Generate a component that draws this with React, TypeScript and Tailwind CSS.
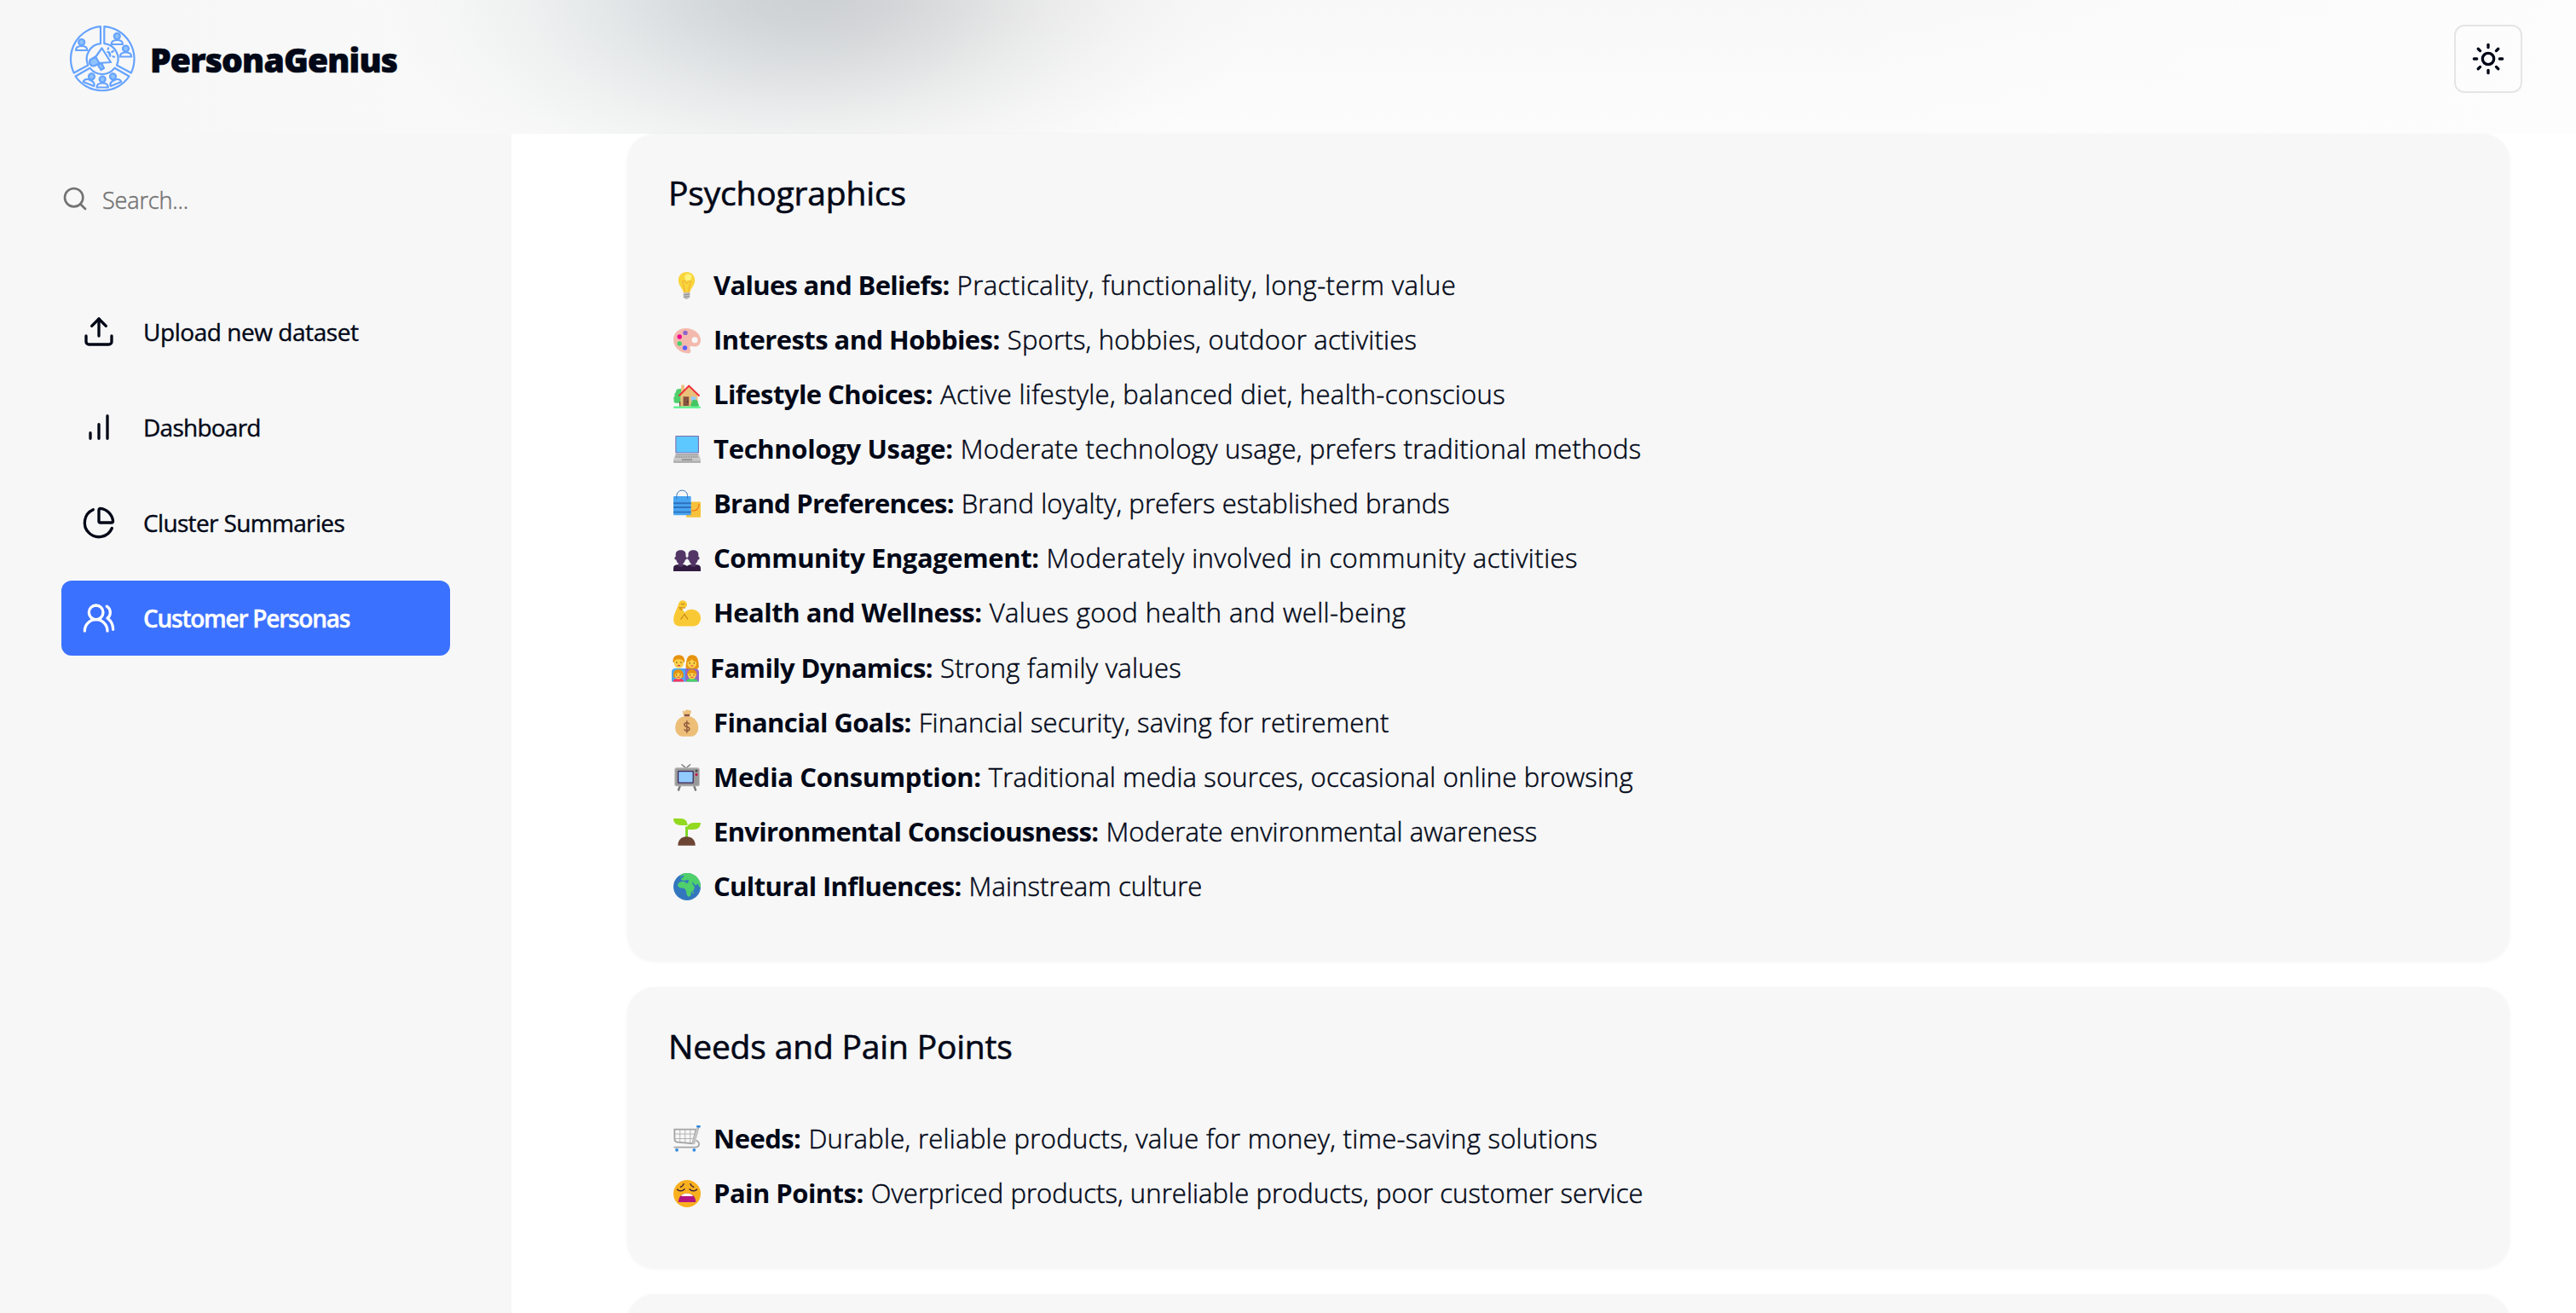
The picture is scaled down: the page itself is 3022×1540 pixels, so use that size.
import type { ReactNode } from "react";
import { PieChart, Search, Sun, Upload, UsersRound } from "lucide-react";

const emojis: Record<string, ReactNode> = {
  bulb: (
    <>
      <path d="M15.500 0C10 0 5.800 4.200 5.800 9.700c0 3.300 1.500 5.800 2.900 8.100C10 20 11.200 21.800 11.600 24h7.800c.4-2.200 1.600-4 2.900-6.200 1.400-2.300 2.900-4.800 2.900-8.100C25.200 4.200 21 0 15.500 0Z" fill="#F9D53C" />
      <path d="M13.600 23.500 11.500 14.500c-.8-2.500-1.300-4 .2-4.500 1.600-.4 2.200 3.500 3.800 3.500s2.200-3.900 3.800-3.500c1.500.5 1 2 .2 4.500l-2.100 9" fill="none" stroke="#F2A930" strokeWidth="1" />
      <circle cx="17.200" cy="6.200" r="4" fill="#FDF27A" />
      <path d="M11.700 24h7.600v5.500c0 .6-.6 1-1.300 1.200-.6 1.700-4.400 1.700-5 0-.7-.2-1.300-.6-1.300-1.200Z" fill="#C4C4C4" />
      <path d="m12 27 7.200-1.400M12.200 29.600l6.800-1.400" stroke="#8E8E8E" strokeWidth="1.100" />
    </>
  ),
  palette: (
    <>
      <path fillRule="evenodd" d="M14.500 2C24.500 2 32 8.500 32 16c0 4.500-3 7.600-7 7.600-2 0-3-.6-4.200-.6-1.800 0-1.800 1.800-1 3.400 1 2.400.4 5-2.400 5C8 31.400 0 24.500 0 15.500 0 7.500 6 2 14.500 2ZM25 12.300a3.500 3.500 0 1 0 0 7 3.500 3.500 0 0 0 0-7Z" fill="#F4B9AD" />
      <circle cx="7.200" cy="12" r="2.700" fill="#EE0290" />
      <circle cx="14" cy="7.400" r="2.700" fill="#8F65C8" />
      <circle cx="7.200" cy="20" r="2.700" fill="#44D26A" />
      <circle cx="13.500" cy="25" r="2.700" fill="#5B5FFC" />
    </>
  ),
  house: (
    <>
      <path d="M9 5.600C9 5 9.400 4.600 10 4.600h2c.6 0 1 .4 1 1V14H9Z" fill="#EEC284" />
      <path d="M7.500 9C4 8.500 2.500 11 3 13c-2 1-2 3-1.200 4.300C0 18.500-.3 21 .8 22c-1 2.500.7 4 2.700 3.800H9V9Z" fill="#4FD06D" />
      <path d="M7 24h2v6H7Z" fill="#7A4B3A" />
      <path d="M8.300 15 18 6l10.500 9v15H8.300Z" fill="#EABF79" />
      <path d="M11.500 18.200h6.700V29h-6.700Z" fill="#85523F" />
      <circle cx="16.700" cy="24.300" r=".8" fill="#3B2020" />
      <path d="M20.700 18.200h5.600v5h-5.600Z" fill="#92CBFF" />
      <path d="M6.300 17.500 18.200 5.500l12.300 12" fill="none" stroke="#EF2A38" strokeWidth="1.800" />
      <circle cx="25" cy="25.500" r="3.800" fill="#44C563" />
      <ellipse cx="25" cy="28" rx="5" ry="3" fill="#44C563" />
      <rect y="29.500" width="32" height="2.500" rx="1.200" fill="#66F294" />
    </>
  ),
  laptop: (
    <>
      <rect x="2.300" width="27.700" height="20.500" rx=".8" fill="#7F6FB0" />
      <rect x="3.400" y="1" width="25.500" height="18.500" fill="#5DC8FF" />
      <path d="M2.500 21h27L32 28v3.400H0V28Z" fill="#C9C9C9" />
      <path d="M3.300 22.500h25.500M2.700 25h26.500" stroke="#8C8C8C" strokeWidth="1.500" strokeDasharray="1.300 .7" />
      <path d="M0 29.500h32v1.500c0 .5-.5 1-1 1H1c-.5 0-1-.5-1-1Z" fill="#B0B0B0" />
      <rect x="9.800" y="27" width="12.400" height="2.200" rx=".6" fill="#9A9A9A" />
    </>
  ),
  bags: (
    <>
      <rect x="15" y="13.500" width="17" height="18.300" rx="1" fill="#F6C23B" />
      <path d="M30 16c.3 4.500-2.500 8-6 8h-3" fill="none" stroke="#F56A1D" strokeWidth="1.100" />
      <rect y="7" width="20.600" height="22.300" rx="1" fill="#48A5F2" />
      <path d="M0 15.300h20.600M0 20h20.600M0 25.600h20.600" stroke="#2C70BC" strokeWidth="1.900" />
      <path d="M3.800 10V6.500a6.400 6.400 0 0 1 12.800 0V10" fill="none" stroke="#3878BE" strokeWidth="1" />
    </>
  ),
  people: (
    <>
      <path d="M0 31h16V25c-1-1.200-3-1.700-4.800-1.700h-6C2 23.300 0 24.700 0 27.500V31Z" fill="#321B41" />
      <path d="M32 31H16V25c1-1.200 3-1.700 4.800-1.700h6c3.200 0 5.200 1.400 5.200 4.200V31Z" fill="#321B41" />
      <path d="M8.600 6.300C5 6.300 2.700 8 2.700 11v3c-2 .3-1.700 3.500.6 3.600.4 2 1.300 3.500 2.600 4.500v2.200c0 2 5.400 2 5.400 0v-2.200c1.300-1 2.200-2.500 2.600-4.500 2.300-.1 2.600-3.300.6-3.600v-3c0-3-2.300-4.700-5.900-4.700Z" fill="#533566" />
      <path d="M23.400 6.300c-3.600 0-5.900 1.700-5.900 4.700v3c-2 .3-1.700 3.500.6 3.600.4 2 1.300 3.500 2.600 4.500v2.200c0 2 5.400 2 5.400 0v-2.200c1.300-1 2.200-2.500 2.600-4.500 2.300-.1 2.600-3.300.6-3.600v-3c0-3-2.300-4.700-5.900-4.700Z" fill="#533566" />
    </>
  ),
  flex: (
    <>
      <path d="M6 5.500C7 2 9 1 11 1.200c3 .2 5.300 2.500 5 5.500-.3 2.500-2 3.300-4.600 3.300-.6 2 .2 4 2.100 5.300C15.500 12.500 18.500 11.500 22 11.700c5.500.3 10 4.300 10 10 0 5.500-3.500 9.800-9 9.800H7.500C2.500 31.500-.3 28 .2 22.500.7 17 4.500 10.500 6 5.500Z" fill="#F9C935" />
      <path d="M6.500 9.500c3 .5 5 .7 7.500.3M9 5.200c1.500.7 3 .6 4-.2M7 10.500l3 2M8.500 23.500l4.500-6 4 6" fill="none" stroke="#C48619" strokeWidth="1.200" />
    </>
  ),
  family: (
    <>
      <path d="M0 31.500V20c0-3 2-4 4-4h12v15.500Z" fill="#4FA8F2" />
      <path d="M16 31.500V16h11c3 0 5 1.500 5 4.500v11Z" fill="#9166C9" />
      <path d="M1.500 9C1 3 4 .3 8.300.3S15.600 3 15 9Z" fill="#E6930F" />
      <path d="M16.500 14C17.500 5 18 .3 24 .3S31.500 5 31.700 14c0 2-2 3-4 2.500h-7c-2.500.5-4.200-.5-4.200-2.500Z" fill="#E6930F" />
      <path d="M3 7c2-2.500 8-2.500 10.800 0v3.500c0 3-2.500 5-5.400 5S3 13.500 3 10.500Z" fill="#FAD14B" />
      <path d="M18.500 8.500C21 8 22.500 6.500 23.500 5c1.500 2 3 3 5.500 3.500v2c0 3-2.500 5-5.300 5s-5.200-2-5.200-5Z" fill="#FAD14B" />
      <path d="M1.500 31.500C2 28.500 4 28 7.800 28s6 .5 6.500 3.500Z" fill="#F7345F" />
      <path d="M17 31.500c.5-3 2.500-3.500 6.500-3.500s6.500.5 7 3.500Z" fill="#44D565" />
      <path d="M2 26c-.5-6 1.500-8.800 5.800-8.800s6.500 2.800 6 8.800c0 1.500-11.800 1.500-11.800 0Z" fill="#E6930F" />
      <path d="M18 24c0-4.500 2-6.800 5.800-6.800S29.500 19.500 29.500 24Z" fill="#E6930F" />
      <path d="M3.800 23c2-.3 3-1.200 4-2.500 1 1.300 2.200 2.200 4.200 2.500 0 3.500-1.500 5.500-4.200 5.500s-4-2-4-5.500Z" fill="#FAD14B" />
      <path d="M19 23c2.500-2 7-2 9.500 0 .3 3.500-2 5.500-4.800 5.500S18.700 26.500 19 23Z" fill="#FAD14B" />
      <path d="M5.800 8.300v1.400M11 8.300v1.400M21.200 9v1.400M26.300 9v1.400M5.700 23.200v1.200M10 23.200v1.200M21.500 23.200v1.200M26 23.200v1.200" stroke="#6B3B12" strokeWidth="1.100" />
      <path d="M6.800 12.600h3.200M22.300 13h3M6.500 26.300h2.800M22.500 26.300h2.800" stroke="#D9314B" strokeWidth="1.100" />
    </>
  ),
  money: (
    <>
      <path d="M12 7 10.500 2c1-1 2 .8 3 0L15.500 0c1 0 1.500 1.500 2.500 1s2.500.5 3 1.500L19.500 7Z" fill="#EDC17E" />
      <path d="M12 8.300C5.500 10 2.200 15.500 2.200 21.500c0 7 4.500 10.300 9.500 10.300h8c5 0 9.500-3.300 9.500-10.300 0-6-3.700-11.500-9.700-13.200Z" fill="#ECBE78" />
      <rect x="12.700" y="5.800" width="6.300" height="2.400" rx=".8" fill="#8A5141" />
      <path d="M18.800 17.300c-.7-1.200-1.800-1.600-3-1.600-1.800 0-3 .9-3 2.300 0 3.300 6 1.600 6 4.800 0 1.500-1.300 2.400-3 2.400-1.500 0-2.700-.6-3.300-1.900M15.800 13.200v14.500" fill="none" stroke="#935B3F" strokeWidth="1.500" />
    </>
  ),
  tv: (
    <>
      <path d="M9.500.5 14.800 5 20 .5" fill="none" stroke="#6D6D6D" strokeWidth="1.200" />
      <path d="m8 25-2.300 6.500M24 25l2.300 6.500" stroke="#767676" strokeWidth="2.300" />
      <rect x="1.300" y="4.300" width="29.500" height="22" rx="2.500" fill="#B5B5B5" />
      <rect x="2.500" y="5.500" width="27.500" height="19.800" rx="1.500" fill="#989898" />
      <rect x="5" y="8" width="18.800" height="14.700" rx="1" fill="#3B2458" />
      <rect x="6.200" y="9.200" width="16.400" height="12.300" rx=".4" fill="#92CBFF" />
      <circle cx="27" cy="8.200" r="1.400" fill="#4B4B4B" />
      <circle cx="27" cy="12.500" r="1.500" fill="#CA0B4A" />
    </>
  ),
  plant: (
    <>
      <path d="M14 22V9.500h3V22Z" fill="#7FD82B" />
      <path d="M0 0h8.500C13.500 0 16.500 3 16.500 8H9C3.500 8 0 5 0 0Z" fill="#92D91F" />
      <path d="M32 5h-8c-5 0-8.500 3-8.500 8H23c5.500 0 9-3 9-8Z" fill="#92D91F" />
      <path d="M5.300 31.700C5.300 25 9.500 21.300 15.500 21.300S25.700 25 25.700 31.700Z" fill="#6D4534" />
    </>
  ),
  globe: (
    <>
      <circle cx="16" cy="16" r="16" fill="#3277BE" />
      <path d="M9 1.700C11 .7 14 0 16.500 0 22 0 27.500 3 30 8.300c1.700 3.400 2 5.200 2 8l-1.500.8-1.300-3.500-1.800-1-.4 2.200-2.300-1.500-2.500-3.500.6 3.700 2 2.500-.6 3.500-3.400 3-.8 4.500-2.500.7-2-2.500-.5-4.200-2-3-3.500-.5c-2.500-.2-4.500-1.500-4.400-3.500.2-2.300 2-3.500 5-4l3.500.2 1.500 1.800 2.500-.5-.5-2-4-1-3 1-1.500-1.500 1-2.500-1.500-2Z" fill="#4FD06B" />
      <path d="M9.500 3.200 12 2.500v2L9 6.500ZM7 9.500l3-2 1 1.500ZM14.500 8.700l2.500-1 1.500 1.500-2 .8Z" fill="#3277BE" />
      <path d="M22.500 22 23.700 21v2.500l-1.500 1Z" fill="#4FD06B" />
    </>
  ),
  cart: (
    <>
      <path d="M29.500 2 23.800 21.500M.5 25.700h25c3.500 0 5.300-2.500 4.300-5.200-.6-1.500-1.800-2.300-3.300-2.800" fill="none" stroke="#A5A5A5" strokeWidth="1.800" />
      <path d="M1.300 4.600h25.200l-4 16.600L4.500 19.600C2.500 19.400 1.500 18 1.400 16Z" fill="none" stroke="#A3A3A3" strokeWidth="1.800" />
      <path d="M7.700 5v14.600M13.700 5v15M19.700 5v15.500M1.500 10h23.700M1.500 15.500h22.500" stroke="#B4B4B4" strokeWidth="1" />
      <path d="M28.600 3.500 23.500 22" stroke="#C4C4C4" strokeWidth="3" />
      <rect x="27" y="0" width="4.800" height="2.600" rx="1" fill="#2F86DD" />
      <circle cx="4" cy="28.800" r="1.900" fill="#3089DF" />
      <circle cx="24.300" cy="28.800" r="1.900" fill="#3089DF" />
    </>
  ),
  weary: (
    <>
      <circle cx="16" cy="16" r="16" fill="#F8B01E" />
      <path d="M8.500 8.200c1.800-.6 3-1.800 3.500-3.600M23.500 8.200c-1.800-.6-3-1.800-3.500-3.600M4.500 11c2 2.500 6 2.500 8.500-.3M27.500 11c-2 2.500-6 2.500-8.500-.3" fill="none" stroke="#3F2338" strokeWidth="1.500" strokeLinecap="round" />
      <path d="M16 15.800c-7 0-10.200 4.700-10.200 10.200h20.400c0-5.500-3.200-10.200-10.200-10.200Z" fill="#B31480" />
      <path d="M9.500 18c1.500-1.500 3.800-2.200 6.500-2.200s5 .7 6.500 2.200c.5.600 0 1-.6 1H10.100c-.6 0-1.100-.4-.6-1Z" fill="#fff" />
    </>
  ),
};

type Row = { icon: string; label: string; lt: string; value: string; vt: string };

const psychographics: Row[] = [
  { icon: "bulb", label: "Values and Beliefs:", lt: "tracking-[-0.7px]", value: "Practicality, functionality, long-term value", vt: "tracking-[0.47px]" },
  { icon: "palette", label: "Interests and Hobbies:", lt: "tracking-[-0.56px]", value: "Sports, hobbies, outdoor activities", vt: "tracking-[0.24px]" },
  { icon: "house", label: "Lifestyle Choices:", lt: "tracking-[-0.55px]", value: "Active lifestyle, balanced diet, health-conscious", vt: "tracking-[0.34px]" },
  { icon: "laptop", label: "Technology Usage:", lt: "tracking-[-0.32px]", value: "Moderate technology usage, prefers traditional methods", vt: "tracking-[0.27px]" },
  { icon: "bags", label: "Brand Preferences:", lt: "tracking-[-0.74px]", value: "Brand loyalty, prefers established brands", vt: "tracking-[0.11px]" },
  { icon: "people", label: "Community Engagement:", lt: "tracking-[-0.42px]", value: "Moderately involved in community activities", vt: "tracking-[0.45px]" },
  { icon: "flex", label: "Health and Wellness:", lt: "tracking-[-0.49px]", value: "Values good health and well-being", vt: "tracking-[0.41px]" },
  { icon: "family", label: "Family Dynamics:", lt: "tracking-[-0.6px] -ml-1", value: "Strong family values", vt: "tracking-[0.31px]" },
  { icon: "money", label: "Financial Goals:", lt: "tracking-[-0.62px]", value: "Financial security, saving for retirement", vt: "tracking-[0.23px]" },
  { icon: "tv", label: "Media Consumption:", lt: "tracking-[-0.34px]", value: "Traditional media sources, occasional online browsing", vt: "tracking-[0.15px]" },
  { icon: "plant", label: "Environmental Consciousness:", lt: "tracking-[-0.69px]", value: "Moderate environmental awareness", vt: "tracking-[0.1px]" },
  { icon: "globe", label: "Cultural Influences:", lt: "tracking-[-0.64px]", value: "Mainstream culture", vt: "tracking-[0.1px]" },
];

const needs: Row[] = [
  { icon: "cart", label: "Needs:", lt: "tracking-[-0.55px]", value: "Durable, reliable products, value for money, time-saving solutions", vt: "tracking-[0.29px]" },
  { icon: "weary", label: "Pain Points:", lt: "tracking-[-0.55px]", value: "Overpriced products, unreliable products, poor customer service", vt: "tracking-[0.08px]" },
];

function Emoji({ name }: { name: string }) {
  const shift = name === "family" ? "-ml-0.5 mr-0.5" : "";
  return (
    <svg viewBox="0 0 32 32" className={`mt-0.5 h-8 w-8 shrink-0 overflow-visible ${shift}`}>
      {emojis[name]}
    </svg>
  );
}

function Card({ title, rows }: { title?: string; rows: Row[] }) {
  return (
    <section className="min-h-40 shrink-0 rounded-[32px] bg-[#f7f7f7] px-12 pb-14 shadow-[0_1px_4px_rgba(0,0,0,0.05)]">
      {title && (
        <h2 className="h-[145px] pt-[41px] text-[39px] leading-[56px] font-medium tracking-[-0.18px] [-webkit-text-stroke:0.6px]">{title}</h2>
      )}
      <ul>
        {rows.map((r) => (
          <li
            key={r.label}
            className={`flex items-center pl-1.5 text-[31px] leading-10 whitespace-pre ${r.icon === "family" ? "h-[65px] pt-px" : "h-16"}`}
          >
            <Emoji name={r.icon} />
            <span className={`pl-[15px] font-bold ${r.lt}`}>{r.label}</span>
            <span className={`pl-[9px] font-light [-webkit-text-stroke:0.5px] ${r.vt}`}>{r.value}</span>
          </li>
        ))}
      </ul>
    </section>
  );
}

function Bars() {
  return (
    <svg viewBox="0 0 24 24" className="h-10 w-10" fill="none" stroke="currentColor" strokeWidth="2" strokeLinecap="round">
      <path d="M6 20v-4M12 20V10M18 20V4" />
    </svg>
  );
}

function Person({ x, y, r = 0 }: { x: number; y: number; r?: number }) {
  return (
    <g transform={`translate(${x} ${y}) rotate(${r})`}>
      <path d="M-6.700 9.500C-6.700 6 -4 4.500 0 4.500S6.700 6 6.700 9.500Z" />
      <circle r="3.500" fill="#8fc3fb" />
    </g>
  );
}

function Logo() {
  return (
    <svg viewBox="0 0 80 80" className="h-20 w-20" fill="none" stroke="#66a3ff" strokeWidth="2.200" strokeLinejoin="round">
      <path d="M38 2.200A38 38 0 0 0 6.700 56.500L23.300 47.500A18 18 0 0 1 38 22.200Z" />
      <path d="M42.300 2.200A38 38 0 0 1 73.800 56.500L57 47.500A18 18 0 0 0 42.300 22.200Z" />
      <path d="M8.500 60.500A38 38 0 0 0 71.500 60.500L54.500 50.700A18 18 0 0 1 25.500 50.700Z" />
      <Person x={15.700} y={20.500} />
      <Person x={57.300} y={13.500} />
      <Person x={67.500} y={28} />
      <Person x={27.500} y={60.700} r={22} />
      <Person x={40.200} y={64} />
      <Person x={52.500} y={60.700} r={-22} />
      <path d="m39.500 27.500 10.500 16.500-14 1-4-7Z" />
      <path d="m26 41 6-3.500 4.500 7.500-6 3.500c-4.500 0-7-4-4.500-7.500ZM34.500 47l4.500-2 3 6-3.500 2Z" fill="#8fc3fb" />
      <path d="M45.500 32c3-.5 5 3 3 5.500" fill="#8fc3fb" />
      <path d="m46.500 29.500.8-3M50.500 32.500l3-2M51.500 37l3.500 1" />
    </svg>
  );
}

const nav = [
  { label: "Upload new dataset", tracking: "tracking-[-0.45px]", icon: <Upload size={40} /> },
  { label: "Dashboard", tracking: "tracking-[-0.75px]", icon: <Bars /> },
  { label: "Cluster Summaries", tracking: "tracking-[-0.65px]", icon: <PieChart size={40} /> },
  { label: "Customer Personas", tracking: "tracking-[-1.25px]", icon: <UsersRound size={40} />, active: true },
];

export default function App() {
  return (
    <div className="flex h-[1540px] w-[3022px] flex-col overflow-hidden bg-white font-['Open_Sans',sans-serif] text-[#020817]">
      <header className="flex h-[157px] shrink-0 items-start justify-between bg-[radial-gradient(ellipse_330px_200px_at_830px_-10px,rgba(130,180,200,0.08)_0%,rgba(130,180,200,0.04)_50%,transparent_100%),radial-gradient(ellipse_530px_275px_at_965px_-12px,rgba(20,25,35,0.175)_0%,rgba(20,25,35,0.154)_16.7%,rgba(20,25,35,0.108)_33.3%,rgba(20,25,35,0.062)_50%,rgba(20,25,35,0.028)_66.7%,rgba(20,25,35,0.009)_83.3%,transparent_100%),linear-gradient(to_right,#f7f7f7_0%,#f8f9f8_22%,transparent_45%,transparent_70%,#fdfdfd_100%),linear-gradient(to_bottom,#f8f8f8_0%,#fcfcfc_100%)] pt-[29px] pr-[63px] pl-20">
        <div className="flex items-center">
          <Logo />
          <span className="pt-0.5 pl-4 text-[39px] leading-[56px] font-black tracking-[-0.8px] [-webkit-text-stroke:0.7px]">PersonaGenius</span>
        </div>
        <button className="flex h-20 w-20 items-center justify-center rounded-xl border-2 border-[#e5e5e5]">
          <Sun size={40} />
        </button>
      </header>
      <div className="flex min-h-0 grow">
        <aside className="w-[600px] shrink-0 bg-[#f7f7f7] px-[72px] pt-[56px]">
          <div className="flex h-10 items-center gap-4 text-[27px] text-[#737373]">
            <Search size={32} />
            <span className="pt-1 font-light tracking-[-0.15px] [-webkit-text-stroke:0.5px]">Search...</span>
          </div>
          <nav className="mt-[92px] flex flex-col gap-6">
            {nav.map((n) => (
              <a
                key={n.label}
                className={`flex h-[88px] items-center gap-8 rounded-xl px-6 text-[28px] [-webkit-text-stroke:0.4px] ${n.active ? "bg-[#3b71ff] font-semibold text-white" : "font-medium"} ${n.tracking}`}
              >
                {n.icon}
                {n.label}
              </a>
            ))}
          </nav>
        </aside>
        <main className="flex grow flex-col gap-[31px] pr-[78px] pl-[136px]">
          <Card title="Psychographics" rows={psychographics} />
          <Card title="Needs and Pain Points" rows={needs} />
          <Card rows={[]} />
        </main>
      </div>
    </div>
  );
}
